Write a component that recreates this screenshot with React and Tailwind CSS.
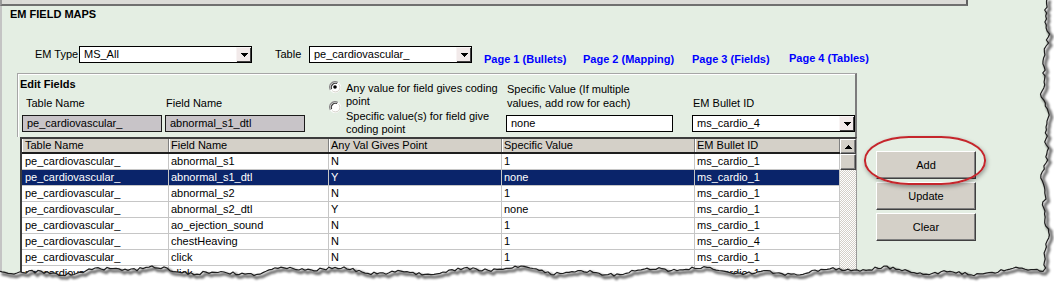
import React from 'react';

const rows = [
  ['pe_cardiovascular_', 'abnormal_s1', 'N', '1', 'ms_cardio_1'],
  ['pe_cardiovascular_', 'abnormal_s1_dtl', 'Y', 'none', 'ms_cardio_1'],
  ['pe_cardiovascular_', 'abnormal_s2', 'N', '1', 'ms_cardio_1'],
  ['pe_cardiovascular_', 'abnormal_s2_dtl', 'Y', 'none', 'ms_cardio_1'],
  ['pe_cardiovascular_', 'ao_ejection_sound', 'N', '1', 'ms_cardio_1'],
  ['pe_cardiovascular_', 'chestHeaving', 'N', '1', 'ms_cardio_4'],
  ['pe_cardiovascular_', 'click', 'N', '1', 'ms_cardio_1'],
  ['pe_cardiovascular_', 'click', 'N', '1', 'ms_cardio_1'],
];

const headers = ['Table Name', 'Field Name', 'Any Val Gives Point', 'Specific Value', 'EM Bullet ID'];
const colCls = [
  'w-[147px] pl-[3px]',
  'w-[160px] pl-[2px]',
  'w-[173px] pl-[2px]',
  'w-[193px] pl-[2px]',
  'w-[145px] pl-[2px]',
];

function DownTri() {
  return (
    <svg width="7" height="4" viewBox="0 0 7 4">
      <path d="M0 0h7v1h-1v1h-1v1h-1v1h-1v-1h-1v-1h-1v-1h-1z" fill="#000" />
    </svg>
  );
}

function UpTri() {
  return (
    <svg width="7" height="4" viewBox="0 0 7 4">
      <path d="M0 4h7v-1h-1v-1h-1v-1h-1v-1h-1v1h-1v1h-1v1h-1z" fill="#000" />
    </svg>
  );
}

function Combo({ className, value }) {
  return (
    <div className={`flex h-[17px] border border-black bg-white ${className}`}>
      <div className="flex-1 pl-[4px] leading-[15px] whitespace-nowrap overflow-hidden">{value}</div>
      <div className="w-[15px] h-[15px] flex items-center justify-center bg-[#f2eaea] border-t border-l border-t-[#f8f4f4] border-l-[#f8f4f4] shadow-[inset_-1px_-1px_0_#404040]">
        <DownTri />
      </div>
    </div>
  );
}

function Radio({ checked }) {
  return (
    <svg width="12" height="12" viewBox="0 0 12 12" className="shrink-0 block">
      <circle cx="6" cy="6" r="5.5" fill="#ffffff" stroke="#ffffff" strokeWidth="1" />
      <path d="M1.4 8.9 A5.5 5.5 0 0 1 8.9 1.4" stroke="#8a8a8a" strokeWidth="1.2" fill="none" />
      <path d="M2.6 8.1 A4.2 4.2 0 0 1 8.1 2.6" stroke="#3a3a3a" strokeWidth="1.1" fill="none" />
      <path d="M9.6 3.2 A4.4 4.4 0 0 1 3.2 9.6" stroke="#d4d0c8" strokeWidth="1" fill="none" />
      {checked && <circle cx="6" cy="6" r="1.8" fill="#000" />}
    </svg>
  );
}

function Btn({ children }) {
  return (
    <div className="w-[100px] h-[28px] bg-[#d4d0c8] border border-t-white border-l-white border-b-[#404040] border-r-[#404040] shadow-[inset_-1px_-1px_0_#808080] flex items-center justify-center leading-[13px]">
      {children}
    </div>
  );
}

function TornEdge() {
  const rnd = (i) => {
    const s = Math.sin(i * 12.9898 + 78.233) * 43758.5453;
    return s - Math.floor(s);
  };
  const right = [];
  for (let y = -2; y <= 268; y += 3) {
    const x = 1045 + 2.2 * Math.sin(y / 17) + 1.5 * Math.sin(y / 6.3 + 2) + (rnd(y + 7) - 0.5) * 3.5;
    right.push([x, y]);
  }
  const bottom = [];
  for (let x = 1043; x >= -3; x -= 3) {
    const y = 271 + 2.5 * Math.sin(x / 29) + 1.8 * Math.sin(x / 9.7 + 1) + (rnd(x + 500) - 0.5) * 3;
    bottom.push([x, y]);
  }
  const edge = [...right, ...bottom];
  const pts = edge.map((p) => `${p[0].toFixed(1)},${p[1].toFixed(1)}`).join(' ');
  const shadowPts = edge.map((p) => `${(p[0] + 2.5).toFixed(1)},${(p[1] + 2.5).toFixed(1)}`).join(' ');
  const outside = `M1060,-2 L${pts.split(' ').join(' L')} L-3,290 L1060,290 Z`;
  return (
    <svg className="absolute left-0 top-0 pointer-events-none" width="1054" height="282" viewBox="0 0 1054 282">
      <defs>
        <filter id="blur" x="-5%" y="-5%" width="110%" height="110%">
          <feGaussianBlur stdDeviation="1.3" />
        </filter>
      </defs>
      <path d={outside} fill="#ffffff" />
      <polyline points={shadowPts} fill="none" stroke="#000" strokeOpacity="0.55" strokeWidth="3.2" filter="url(#blur)" />
      <polyline points={pts} fill="none" stroke="#1e1e1e" strokeWidth="1.2" />
    </svg>
  );
}

export default function App() {
  return (
    <div className="relative w-[1054px] h-[282px] overflow-hidden bg-[#e4eee3] text-[11px] text-black font-['Liberation_Sans',Arial,sans-serif]">
      <div className="h-[6px] w-[968px] bg-[#dcdcd8] border-l-2 border-l-[#9a9a9a] border-b-2 border-b-[#707070] border-r-2 border-r-[#606060]" />
      <div className="h-[276px] border-l-2 border-l-[#c4c4c4] flex flex-col">
        <div className="pl-[8px] pt-[2px] leading-[13px] font-bold">EM FIELD MAPS</div>

        <div className="mt-[25px] flex h-[17px]">
          <div className="ml-[33px] w-[44px] leading-[17px]">EM Type</div>
          <Combo className="w-[173px]" value="MS_All" />
          <div className="ml-[23px] w-[34px] leading-[17px]">Table</div>
          <Combo className="w-[163px]" value="pe_cardiovascular_" />
          <div className="ml-[12px] w-[99px] pt-[5px] leading-[17px] font-bold text-[#0000ff] whitespace-nowrap">Page 1 (Bullets)</div>
          <div className="w-[109px] pt-[5px] leading-[17px] font-bold text-[#0000ff] whitespace-nowrap">Page 2 (Mapping)</div>
          <div className="w-[97px] pt-[5px] leading-[17px] font-bold text-[#0000ff] whitespace-nowrap">Page 3 (Fields)</div>
          <div className="pt-[4px] leading-[17px] font-bold text-[#0000ff] whitespace-nowrap">Page 4 (Tables)</div>
        </div>

        <div className="mt-[10px] flex flex-1 min-h-0">
          <div className="ml-[15px] w-[840px] flex flex-col">
            <div className="h-[64px] shrink-0 border-t border-l border-r-2 border-t-[#a6a6a6] border-l-[#a6a6a6] border-r-[#7c7c7c] shadow-[inset_1px_1px_0_#ffffff] pt-[1px] pl-[1px] pb-[5px] overflow-hidden flex">
              <div className="ml-[3px] w-[140px] flex flex-col">
                <div className="-ml-[2px] pt-[2.5px] leading-[13px] font-bold">Edit Fields</div>
                <div className="mt-auto pl-[4px] leading-[14px] mb-[5px]">Table Name</div>
                <div className="h-[17px] border border-[#1a1a1a] bg-[#c8c4c8] pl-[4px] leading-[15px] whitespace-nowrap">pe_cardiovascular_</div>
              </div>
              <div className="ml-[3px] w-[140px] flex flex-col justify-end">
                <div className="pl-[1px] leading-[14px] mb-[5px]">Field Name</div>
                <div className="h-[17px] border border-[#1a1a1a] bg-[#c8c4c8] pl-[4px] leading-[15px] whitespace-nowrap">abnormal_s1_dtl</div>
              </div>
              <div className="ml-[24px] w-[177px] flex flex-col pt-[7px]">
                <div className="flex gap-[5px]">
                  <div className="-mt-[1px]"><Radio checked /></div>
                  <div className="leading-[13px]">Any value for field gives coding point</div>
                </div>
                <div className="-mt-[7px] flex gap-[5px]">
                  <Radio />
                  <div className="pt-[9px] leading-[13px]">Specific value(s) for field give coding point</div>
                </div>
              </div>
              <div className="w-[167px] flex flex-col justify-end">
                <div className="w-[150px] pl-[1px] leading-[14px] mb-[5px]">Specific Value (If multiple values, add row for each)</div>
                <div className="h-[17px] border border-black bg-white pl-[4px] leading-[15px]">none</div>
              </div>
              <div className="ml-[19px] w-[163px] flex flex-col justify-end">
                <div className="pl-[1px] leading-[14px] mb-[5px]">EM Bullet ID</div>
                <Combo className="w-[163px]" value="ms_cardio_4" />
              </div>
            </div>

            <div className="ml-[3px] flex-1 min-h-0 flex overflow-hidden border-t-2 border-l-2 border-t-[#3c3c3c] border-l-[#3c3c3c] border-r border-r-[#9a9a9a] bg-white">
              <div className="w-[818px] flex flex-col">
                <div className="flex h-[15px] shrink-0 border-b-2 border-b-[#1e1e1e]">
                  {headers.map((h, i) => (
                    <div key={h} className={`${colCls[i]} h-[13px] leading-[13px] bg-[#d4d0c8] border-r border-r-[#808080] shadow-[inset_1px_0_0_#ffffff] whitespace-nowrap overflow-hidden`}>
                      {h}
                    </div>
                  ))}
                </div>
                {rows.map((r, ri) => (
                  <div key={ri} className={`flex h-[16px] shrink-0 ${ri === 1 ? 'bg-[#0a246a] text-white' : 'bg-white'}`}>
                    {r.map((c, ci) => (
                      <div key={ci} className={`${colCls[ci]} h-[16px] leading-[15px] border-b border-b-[#c6c6c6] border-r border-r-[#c6c6c6] whitespace-nowrap overflow-hidden`}>
                        {c}
                      </div>
                    ))}
                  </div>
                ))}
              </div>
              <div className="w-[16px] flex flex-col">
                <div className="h-[15px] shrink-0 bg-[#d4d0c8] border border-t-white border-l-white border-b-[#404040] border-r-[#404040] shadow-[inset_-1px_-1px_0_#808080] flex items-center justify-center">
                  <UpTri />
                </div>
                <div className="h-[16px] shrink-0 bg-[#d4d0c8] border border-t-white border-l-white border-b-[#404040] border-r-[#404040] shadow-[inset_-1px_-1px_0_#808080]" />
                <div className="flex-1 bg-[image:repeating-conic-gradient(#d4d0c8_0_25%,#ffffff_0_50%)] bg-[length:2px_2px]" />
              </div>
            </div>
          </div>

          <div className="ml-[19px] mt-[78px] flex flex-col gap-[3px]">
            <div className="relative">
              <Btn>Add</Btn>
              <div className="absolute left-[-12px] top-[-15px] w-[122px] h-[49px] rounded-[45px/24px] border-2 border-[#c5262c] shadow-[1px_2px_4px_rgba(0,0,0,0.35)]" />
            </div>
            <Btn>Update</Btn>
            <Btn>Clear</Btn>
          </div>
        </div>
      </div>
      <TornEdge />
    </div>
  );
}
